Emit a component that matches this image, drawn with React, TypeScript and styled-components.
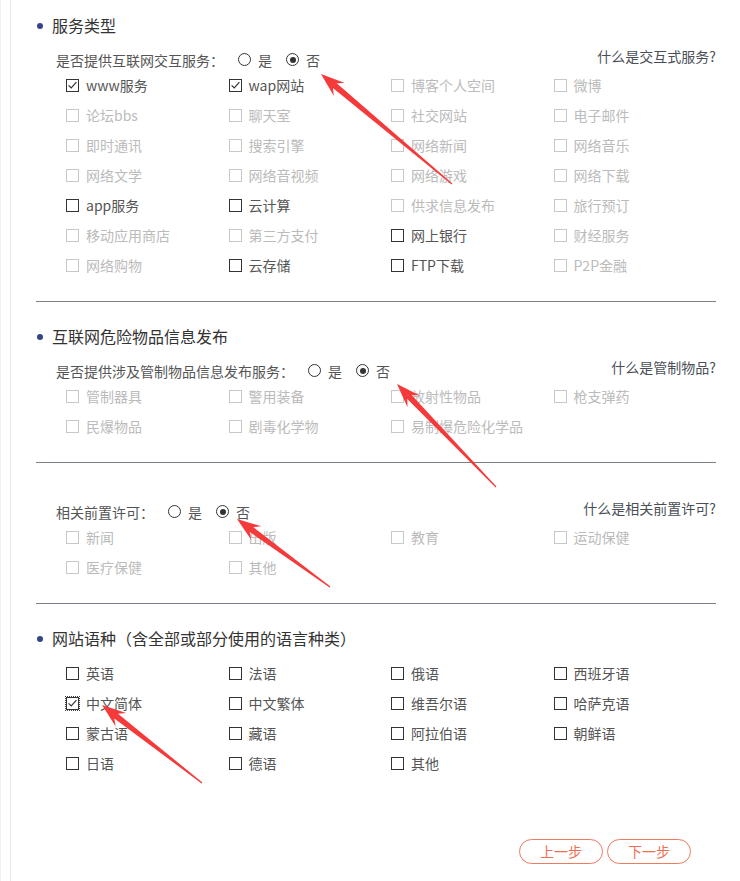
import * as React from 'react';
import styled, { createGlobalStyle } from 'styled-components';

type BoxState = 'checked' | 'normal' | 'disabled';

interface IOption {
  label: string;
  state: BoxState;
  focused?: boolean;
}

interface ISection {
  title?: string;
  question: string;
  link: string;
  options: IOption[];
  topGap: number;
  divider: boolean;
}

const d = (label: string): IOption => ({ label, state: 'disabled' });
const n = (label: string): IOption => ({ label, state: 'normal' });
const c = (label: string, focused = false): IOption => ({ label, state: 'checked', focused });

const sections: ISection[] = [
  {
    title: '服务类型',
    question: '是否提供互联网交互服务：',
    link: '什么是交互式服务?',
    topGap: 14,
    divider: true,
    options: [
      c('www服务'), c('wap网站'), d('博客个人空间'), d('微博'),
      d('论坛bbs'), d('聊天室'), d('社交网站'), d('电子邮件'),
      d('即时通讯'), d('搜索引擎'), d('网络新闻'), d('网络音乐'),
      d('网络文学'), d('网络音视频'), d('网络游戏'), d('网络下载'),
      n('app服务'), n('云计算'), d('供求信息发布'), d('旅行预订'),
      d('移动应用商店'), d('第三方支付'), n('网上银行'), d('财经服务'),
      d('网络购物'), n('云存储'), n('FTP下载'), d('P2P金融')
    ]
  },
  {
    title: '互联网危险物品信息发布',
    question: '是否提供涉及管制物品信息发布服务：',
    link: '什么是管制物品?',
    topGap: 23,
    divider: true,
    options: [
      d('管制器具'), d('警用装备'), d('放射性物品'), d('枪支弹药'),
      d('民爆物品'), d('剧毒化学物'), d('易制爆危险化学品')
    ]
  },
  {
    question: '相关前置许可：',
    link: '什么是相关前置许可?',
    topGap: 40,
    divider: true,
    options: [d('新闻'), d('出版'), d('教育'), d('运动保健'), d('医疗保健'), d('其他')]
  }
];

const languages: IOption[] = [
  n('英语'), n('法语'), n('俄语'), n('西班牙语'),
  c('中文简体', true), n('中文繁体'), n('维吾尔语'), n('哈萨克语'),
  n('蒙古语'), n('藏语'), n('阿拉伯语'), n('朝鲜语'),
  n('日语'), n('德语'), n('其他')
];

// annotation arrows: [tipX, tipY, tailX, tailY]
const arrows: [number, number, number, number][] = [
  [321, 74, 452, 184],
  [397, 384, 496, 487],
  [237, 519, 330, 587],
  [102, 705, 202, 783]
];

const GlobalStyle = createGlobalStyle`
  body {
    margin: 0;
    background: #fff;
    font-family: "Noto Sans CJK SC", "Noto Sans", sans-serif;
  }
`;

const Shell = styled.div`
  position: relative;
  display: flex;
  min-height: 881px;
`;

const Gutter = styled.div`
  width: 9px;
  flex: none;
  border-left: 1px solid #edf1f6;
  border-right: 1px solid #e4e6e9;
`;

const Main = styled.main`
  flex: 1;
  padding: 0 24px 0 25px;
`;

const Section = styled.section<{ $top: number; $divider: boolean }>`
  padding-top: ${(p) => p.$top}px;
  padding-bottom: ${(p) => (p.$divider ? 20 : 0)}px;
  border-bottom: ${(p) => (p.$divider ? '1px solid #7a8088' : 'none')};
`;

const Title = styled.h3`
  box-sizing: border-box;
  display: flex;
  align-items: center;
  gap: 9px;
  margin: 0;
  height: 24px;
  padding-bottom: 2px;
  font-size: 16px;
  font-weight: 400;
  color: #333;

  &::before {
    content: '';
    width: 6px;
    height: 6px;
    margin: 2px 0 0 1px;
    border-radius: 50%;
    background: #34438a;
  }
`;

const QuestionRow = styled.div<{ $gap: number }>`
  box-sizing: border-box;
  display: flex;
  align-items: center;
  justify-content: space-between;
  height: 20px;
  margin-top: ${(p) => p.$gap}px;
  padding: 0 0 3px 20px;
  font-size: 14px;
  color: #555;
`;

const Question = styled.div`
  display: flex;
  align-items: center;
`;

const RadioLabel = styled.label`
  display: flex;
  align-items: center;
  gap: 7px;
  margin-left: 14px;
`;

const Radio = styled.span<{ $on: boolean }>`
  box-sizing: border-box;
  display: inline-flex;
  align-items: center;
  justify-content: center;
  width: 13px;
  height: 13px;
  border: 1px solid #333;
  border-radius: 50%;

  &::after {
    content: '';
    display: ${(p) => (p.$on ? 'block' : 'none')};
    width: 6px;
    height: 6px;
    border-radius: 50%;
    background: #333;
  }
`;

const HelpLink = styled.a`
  margin-bottom: 7px;
  color: #4a4f57;
  font-size: 14px;
  text-decoration: none;
`;

const Grid = styled.div<{ $gap?: number }>`
  display: grid;
  grid-template-columns: repeat(4, 1fr);
  grid-auto-rows: 30px;
  margin-top: ${(p) => p.$gap || 0}px;
  padding-left: 30px;
`;

const Item = styled.label<{ $state: BoxState }>`
  box-sizing: border-box;
  display: flex;
  align-items: center;
  gap: 7px;
  padding-bottom: 2px;
  font-size: 14px;
  color: ${(p) => (p.$state === 'disabled' ? '#bbb' : '#555')};
`;

const Box = styled.span<{ $state: BoxState; $focused?: boolean }>`
  box-sizing: border-box;
  display: inline-flex;
  width: 13px;
  height: 13px;
  flex: none;
  margin-top: 1px;
  border: 1px solid ${(p) => (p.$state === 'disabled' ? '#c8c8c8' : '#333')};
  background: #fff;
  outline: ${(p) => (p.$focused ? '1px dotted #444' : 'none')};
  outline-offset: 0;

  svg {
    display: block;
  }
`;

const Footer = styled.div`
  display: flex;
  justify-content: flex-end;
  gap: 4px;
  margin-top: 60px;
  padding-right: 25px;
`;

const StepButton = styled.button`
  box-sizing: border-box;
  width: 84px;
  height: 25px;
  padding: 0;
  border: 1px solid #ef7a62;
  border-radius: 13px;
  background: #fff;
  color: #ee6e55;
  font-family: inherit;
  font-size: 14px;
  line-height: 21px;
  cursor: pointer;
`;

const Overlay = styled.svg`
  position: absolute;
  left: 0;
  top: 0;
  pointer-events: none;
`;

const Check = () => (
  <svg width="11" height="11" viewBox="0 0 11 11">
    <path d="M1.6 5.4 L4.2 8 L9.4 2.2" fill="none" stroke="#333" strokeWidth="1.2" />
  </svg>
);

const CheckItem = ({ option }: { option: IOption }) => (
  <Item $state={option.state}>
    <Box $state={option.state} $focused={option.focused}>
      {option.state === 'checked' && <Check />}
    </Box>
    {option.label}
  </Item>
);

const arrowPoints = ([tx, ty, bx, by]: [number, number, number, number]) => {
  const len = Math.hypot(tx - bx, ty - by);
  const ux = (tx - bx) / len;
  const uy = (ty - by) / len;
  const nx = -uy;
  const ny = ux;
  const at = (back: number, side: number) =>
    `${(tx - ux * back + nx * side).toFixed(1)},${(ty - uy * back + ny * side).toFixed(1)}`;
  const tail = (side: number) => `${(bx + nx * side).toFixed(1)},${(by + ny * side).toFixed(1)}`;
  return [at(0, 0), at(24, 8.5), at(18, 3), tail(0.6), tail(-0.6), at(18, -3), at(24, -8.5)].join(' ');
};

const App = () => {
  return (
    <>
      <GlobalStyle />
      <Shell>
        <Gutter />
        <Main>
          {sections.map((s) => (
            <Section key={s.question} $top={s.topGap} $divider={s.divider}>
              {s.title && <Title>{s.title}</Title>}
              <QuestionRow $gap={s.title ? 13 : 0}>
                <Question>
                  {s.question}
                  <RadioLabel>
                    <Radio $on={false} />是
                  </RadioLabel>
                  <RadioLabel>
                    <Radio $on />否
                  </RadioLabel>
                </Question>
                <HelpLink href="#">{s.link}</HelpLink>
              </QuestionRow>
              <Grid>
                {s.options.map((o) => (
                  <CheckItem key={o.label} option={o} />
                ))}
              </Grid>
            </Section>
          ))}
          <Section $top={23} $divider={false}>
            <Title>网站语种（含全部或部分使用的语言种类）</Title>
            <Grid $gap={8}>
              {languages.map((o) => (
                <CheckItem key={o.label} option={o} />
              ))}
            </Grid>
          </Section>
          <Footer>
            <StepButton>上一步</StepButton>
            <StepButton>下一步</StepButton>
          </Footer>
        </Main>
        <Overlay width="740" height="881">
          {arrows.map((a, i) => (
            <polygon key={i} points={arrowPoints(a)} fill="#f43a3a" />
          ))}
        </Overlay>
      </Shell>
    </>
  );
};

export default App;
